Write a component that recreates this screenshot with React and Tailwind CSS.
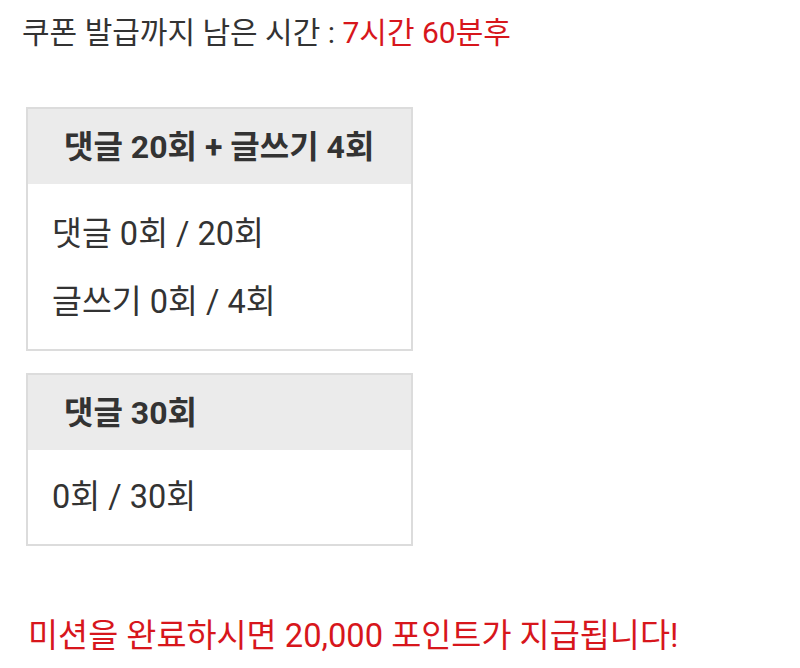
export default function App() {
  const font = { fontFamily: 'Roboto, "Noto Sans CJK KR", sans-serif' };
  return (
    <div className="w-[800px] h-[668px] bg-white text-[#333333]" style={font}>
      <div className="pl-[22px] pt-[14px] text-[30px] leading-[38px]">
        쿠폰 발급까지 남은 시간 : <span className="text-[#d7161c]">7시간 60분후</span>
      </div>
      <div className="ml-[26px] mt-[55px] w-[387px] flex flex-col gap-[22px]">
        <div className="border-2 border-[#dcdcdc]">
          <div className="h-[75px] bg-[#ebebeb] flex items-center px-[36px] text-[32px] font-bold">
            댓글 20회 + 글쓰기 4회
          </div>
          <div className="pl-[24px] pt-[16px] pb-[13px] text-[32.5px] leading-[68px]">
            <div>댓글 0회 / 20회</div>
            <div>글쓰기 0회 / 4회</div>
          </div>
        </div>
        <div className="border-2 border-[#dcdcdc]">
          <div className="h-[75px] bg-[#ebebeb] flex items-center px-[36px] text-[32px] font-bold">
            댓글 30회
          </div>
          <div className="pl-[24px] pt-[14px] pb-[13px] text-[32.5px] leading-[67px]">
            <div>0회 / 30회</div>
          </div>
        </div>
      </div>
      <div className="pl-[28px] mt-[70px] text-[32.7px] leading-[40px] text-[#d7161c]">
        미션을 완료하시면 20,000 포인트가 지급됩니다!
      </div>
    </div>
  );
}
